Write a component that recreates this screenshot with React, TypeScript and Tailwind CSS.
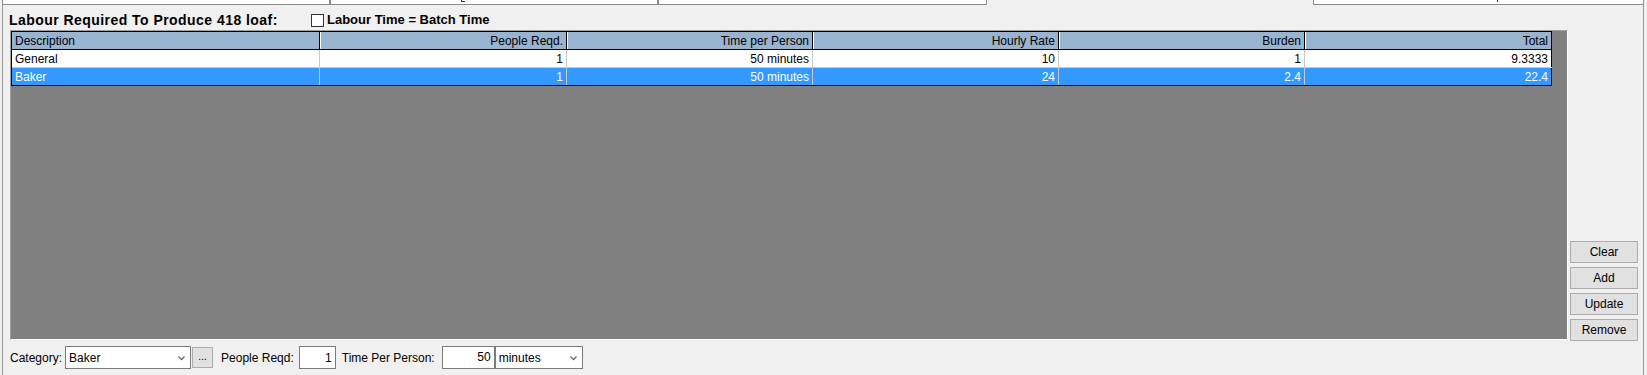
import React from "react";

const Chevron = () => (
  <svg width="9" height="6" viewBox="0 0 9 6" className="shrink-0">
    <polyline points="1.5,1.5 4.5,4.5 7.5,1.5" fill="none" stroke="#6b6b6b" strokeWidth="1.3" />
  </svg>
);

const columns = [
  { w: "w-[308px]", label: "Description", left: true },
  { w: "w-[247px]", label: "People Reqd.", left: false },
  { w: "w-[246px]", label: "Time per Person", left: false },
  { w: "w-[246px]", label: "Hourly Rate", left: false },
  { w: "w-[246px]", label: "Burden", left: false },
  { w: "w-[247px]", label: "Total", left: false },
];

const rows = [
  { cells: ["General", "1", "50 minutes", "10", "1", "9.3333"], selected: false },
  { cells: ["Baker", "1", "50 minutes", "24", "2.4", "22.4"], selected: true },
];

function Btn({ label }: { label: string }) {
  return (
    <div className="h-[22px] w-[68px] flex items-center justify-center bg-[#e1e1e1] border border-[#adadad] text-[12px] text-black">
      {label}
    </div>
  );
}

export default function App() {
  return (
    <div className="w-[1647px] h-[375px] bg-[#f0f0f0] overflow-hidden text-[12px] text-black font-['Liberation_Sans',Arial,sans-serif]">
      {/* tab strip remnants */}
      <div className="flex h-[5px]">
        <div className="w-[2px]" />
        <div className="w-[328px] bg-white border-l border-r border-b border-[#8c8c8c]" />
        <div className="w-[328px] bg-white border-l border-r border-b border-[#8c8c8c] flex">
          <div className="ml-[130px] w-[4px] h-[2px] border-l border-b border-[#333]" />
        </div>
        <div className="w-[329px] bg-white border-l border-r border-b border-[#8c8c8c]" />
        <div className="w-[326px] border-l border-white" />
        <div className="w-[331px] bg-white border-l border-r border-b border-[#8c8c8c] flex">
          <div className="ml-[183px] w-[1px] h-[2px] bg-[#333]" />
        </div>
      </div>

      {/* page */}
      <div className="ml-[2px] w-[1642px] h-[370px] border-l border-r border-[#9a9a9a] flex flex-col">
        {/* title row */}
        <div className="h-[25px] pt-[5px] flex items-center">
          <div className="pl-[6px] w-[306px] text-[14px] font-bold tracking-[0.45px] whitespace-nowrap">
            Labour Required To Produce 418 loaf:
          </div>
          <div className="ml-[2px] flex items-center gap-[3px]">
            <div className="w-[13px] h-[13px] bg-white border border-[#333333]" />
            <span className="text-[13px] font-bold whitespace-nowrap">Labour Time = Batch Time</span>
          </div>
        </div>

        {/* main area */}
        <div className="flex h-[311px] pl-[7px] gap-[2px]">
          <div className="w-[1558px] h-[310px] bg-[#808080] border-t border-l border-t-[#a0a0a0] border-l-[#a0a0a0] border-b border-r border-b-white border-r-white">
            <div className="w-[1541px] border-l border-t border-black">
              {/* header */}
              <div className="flex h-[18px] border-b border-black bg-[#99b4d1]">
                {columns.map((c, i) => (
                  <div
                    key={c.label}
                    className={`${c.w} h-full px-[3px] flex items-center border-r border-black whitespace-nowrap ${
                      c.left ? "justify-start" : "justify-end"
                    } ${i > 0 ? "shadow-[inset_1px_0_0_#ffffff]" : ""}`}
                  >
                    {c.label}
                  </div>
                ))}
              </div>
              {rows.map((r, ri) => (
                <div
                  key={ri}
                  className={`flex h-[18px] border-b ${ri === rows.length - 1 ? "border-black" : "border-[#c8c8c8]"} ${
                    r.selected ? "bg-[#3399ff] text-white" : "bg-white text-black"
                  }`}
                >
                  {r.cells.map((v, ci) => (
                    <div
                      key={ci}
                      className={`${columns[ci].w} h-full px-[3px] flex items-center border-r whitespace-nowrap ${
                        ci === columns.length - 1 ? "border-black" : "border-[#c8c8c8]"
                      } ${ci === 0 ? "justify-start" : "justify-end"}`}
                    >
                      {v}
                    </div>
                  ))}
                </div>
              ))}
            </div>
          </div>
          <div className="flex flex-col justify-end gap-[4px]">
            <Btn label="Clear" />
            <Btn label="Add" />
            <Btn label="Update" />
            <Btn label="Remove" />
          </div>
        </div>

        {/* bottom controls */}
        <div className="mt-[5px] h-[23px] pl-[7px] flex items-center whitespace-nowrap">
          <span>Category:</span>
          <div className="ml-[3px] w-[126px] h-[23px] bg-white border border-[#7a7a7a] flex items-center justify-between pl-[3px] pr-[4px]">
            <span>Baker</span>
            <Chevron />
          </div>
          <div className="ml-[1px] w-[21px] h-[21px] bg-[#e1e1e1] border border-[#adadad] flex items-center justify-center text-[10px] leading-none pb-[1px]">
            ...
          </div>
          <span className="ml-[8px]">People Reqd:</span>
          <div className="ml-[5px] w-[37px] h-[23px] bg-white border border-[#7a7a7a] flex items-center justify-end pr-[3px]">
            1
          </div>
          <span className="ml-[6px]">Time Per Person:</span>
          <div className="ml-[7px] w-[53px] h-[23px] bg-white border border-[#7a7a7a] flex items-center justify-end pr-[3px] pb-[2px]">
            50
          </div>
          <div className="w-[88px] h-[23px] bg-white border border-[#7a7a7a] flex items-center justify-between pl-[3px] pr-[4px]">
            <span>minutes</span>
            <Chevron />
          </div>
        </div>
      </div>
    </div>
  );
}
